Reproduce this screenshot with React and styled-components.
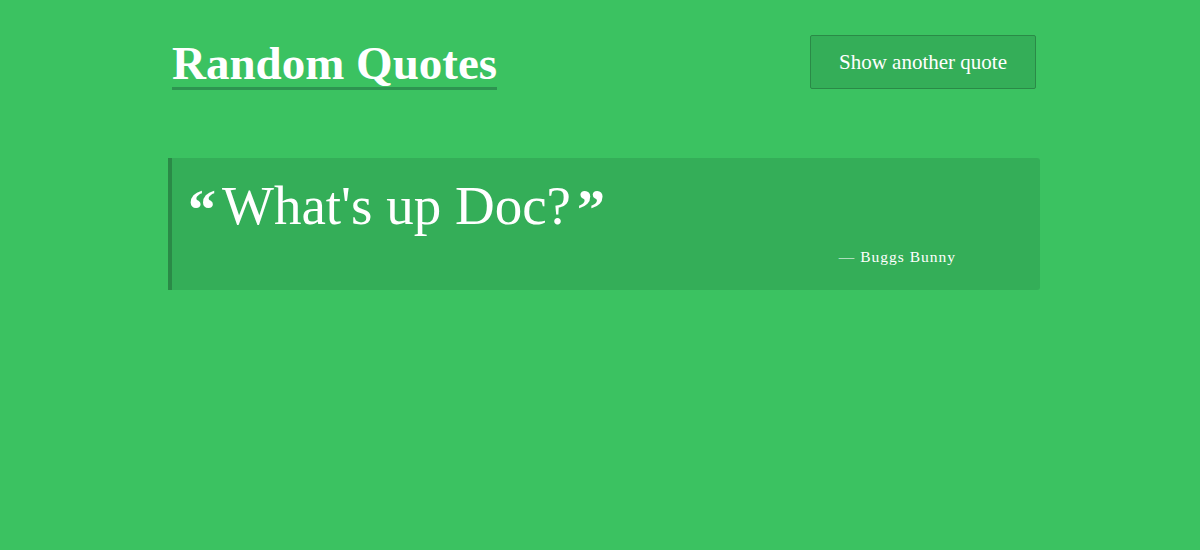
import styled, { createGlobalStyle } from 'styled-components';

const GlobalStyle = createGlobalStyle`
  html, body {
    margin: 0;
    padding: 0;
    background: #3bc261;
    font-family: "Liberation Serif", "DejaVu Serif", serif;
    color: #fff;
  }
`;

const Page = styled.div`
  width: 1200px;
  height: 550px;
  background: #3bc261;
  padding: 35px 160px 0 168px;
  box-sizing: border-box;
`;

const Header = styled.header`
  display: flex;
  justify-content: space-between;
  align-items: flex-start;
  padding-right: 4px;
`;

const Title = styled.h1`
  margin: 0 0 0 4px;
  padding-top: 4px;
  font-size: 47px;
  font-weight: 700;
  line-height: 48px;
  border-bottom: 3px solid #2d9450;
`;

const Button = styled.button`
  width: 226px;
  height: 54px;
  background: #34ae58;
  border: 1px solid #2a8a47;
  border-radius: 2px;
  color: #fff;
  font-family: inherit;
  font-size: 21px;
  cursor: pointer;
`;

const Quote = styled.blockquote`
  margin: 68px 0 0;
  height: 132px;
  box-sizing: border-box;
  background: #34ae58;
  border-left: 4px solid #2a8a47;
  border-radius: 0 3px 3px 0;
  padding: 16px 84px 0 16px;
  display: flex;
  flex-direction: column;
`;

const Text = styled.p`
  margin: 0;
  font-size: 55px;
  line-height: 64px;
  display: flex;
  align-items: flex-start;
  gap: 6px;
`;

const Mark = styled.span`
  font-size: 56px;
  font-weight: 700;
  line-height: 64px;
  margin-top: 4px;
`;

const Author = styled.cite`
  align-self: flex-end;
  margin-top: 6px;
  font-style: normal;
  font-size: 15.5px;
  letter-spacing: 1px;
`;

export default function App() {
  return (
    <Page>
      <GlobalStyle />
      <Header>
        <Title>Random Quotes</Title>
        <Button>Show another quote</Button>
      </Header>
      <Quote>
        <Text>
          <Mark>“</Mark>
          What's up Doc?
          <Mark>”</Mark>
        </Text>
        <Author>— Buggs Bunny</Author>
      </Quote>
    </Page>
  );
}
